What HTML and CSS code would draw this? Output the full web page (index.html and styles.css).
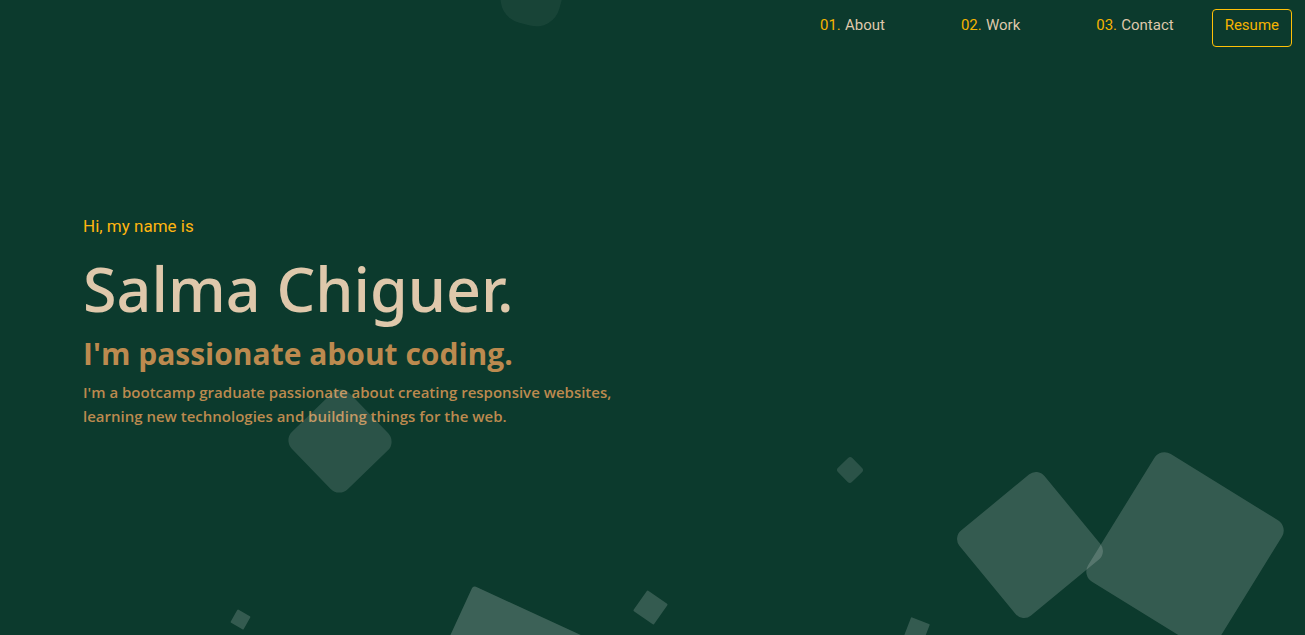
FILE: index.html
```
<!DOCTYPE html>
<html lang="en">
<head>
<meta charset="utf-8">
<title>Salma Chiguer</title>
<link rel="stylesheet" href="styles.css">
</head>
<body>
<header class="header">
  <nav class="nav">
    <a class="nav-link about" href="#about"><span class="num">01.</span>About</a>
    <a class="nav-link work" href="#work"><span class="num">02.</span>Work</a>
    <a class="nav-link contact" href="#contact"><span class="num">03.</span>Contact</a>
    <a class="resume" href="#resume">Resume</a>
  </nav>
</header>
<main class="hero">
  <p class="greeting">Hi, my name is</p>
  <h1 class="name">Salma Chiguer.</h1>
  <h2 class="tagline">I'm passionate about coding.</h2>
  <p class="intro">I'm a bootcamp graduate passionate about creating responsive websites, learning new technologies and building things for the web.</p>
</main>
<div class="squares" aria-hidden="true">
  <span class="square s1"></span>
  <span class="square s2"></span>
  <span class="square s3"></span>
  <span class="square s4"></span>
  <span class="square s5"></span>
  <span class="square s6"></span>
  <span class="square s7"></span>
  <span class="square s8"></span>
  <span class="square s9"></span>
</div>
</body>
</html>
```
FILE: styles.css
```
* { box-sizing: border-box; }
body {
  margin: 0;
  min-height: 100vh;
  overflow: hidden;
  background: #0c3a2d;
  color: #bc8a4f;
  font-family: "Open Sans", "Noto Sans", sans-serif;
}
.header { padding: 9px 13px 0; }
.nav {
  display: flex;
  justify-content: flex-end;
  font: 400 15px/24px Roboto, sans-serif;
}
.nav a { text-decoration: none; }
.nav-link { padding-top: 4px; color: #dfc8ab; }
.num { display: inline-block; width: 25px; color: #f5b301; }
.about { margin-right: 76px; }
.work { margin-right: 76px; }
.contact { margin-right: 38px; }
.resume {
  height: 38px;
  padding: 3px 12px;
  border: 1px solid #ffc107;
  border-radius: 4px;
  color: #f5b301;
}
.hero { padding: 165px 83px 0; }
.hero > * { margin: 0; }
.greeting { color: #ffb510; font: 400 17px/28px Roboto, sans-serif; }
.hero .name { margin-top: 9px; color: #dfc8ab; font-family: "Noto Sans", sans-serif; font-size: 61px; font-weight: 500; line-height: 80px; }
.hero .tagline { margin-top: 5px; font-size: 30px; font-weight: 700; line-height: 40px; }
.hero .intro { max-width: 560px; margin-top: 6px; font-size: 15px; font-weight: 600; line-height: 24px; }

/* Decorative squares floating freely over the page */
.squares { position: absolute; inset: 0; overflow: hidden; pointer-events: none; }
.square { position: absolute; background: rgba(255, 255, 255, .17); }
.s1 { left: 300px; top: 401px; width: 80px; height: 80px; border-radius: 12px; background: rgba(255, 255, 255, .13); transform: rotate(46deg); }
.s2 { left: 975px; top: 490px; width: 110px; height: 110px; border-radius: 11px; transform: rotate(50.5deg); }
.s3 { left: 1110px; top: 476px; width: 150px; height: 150px; border-radius: 12px; transform: rotate(31.7deg); }
.s4 { left: 840px; top: 460px; width: 20px; height: 20px; border-radius: 3px; background: rgba(255, 255, 255, .13); transform: rotate(46deg); }
.s5 { left: 638px; top: 595px; width: 25px; height: 25px; border-radius: 1px; transform: rotate(35deg); }
.s6 { left: 233px; top: 612px; width: 15px; height: 15px; border-radius: 1px; transform: rotate(30deg); }
.s7 { left: 907px; top: 620px; width: 20px; height: 20px; border-radius: 1px; transform: rotate(21deg); }
.s8 { left: 435px; top: 610px; width: 150px; height: 150px; border-radius: 3px; background: rgba(255, 255, 255, .2); transform: rotate(24.7deg); }
.s9 { left: 502px; top: -35px; width: 60px; height: 60px; border-radius: 24px; background: rgba(255, 255, 255, .05); transform: rotate(15deg); }
```
